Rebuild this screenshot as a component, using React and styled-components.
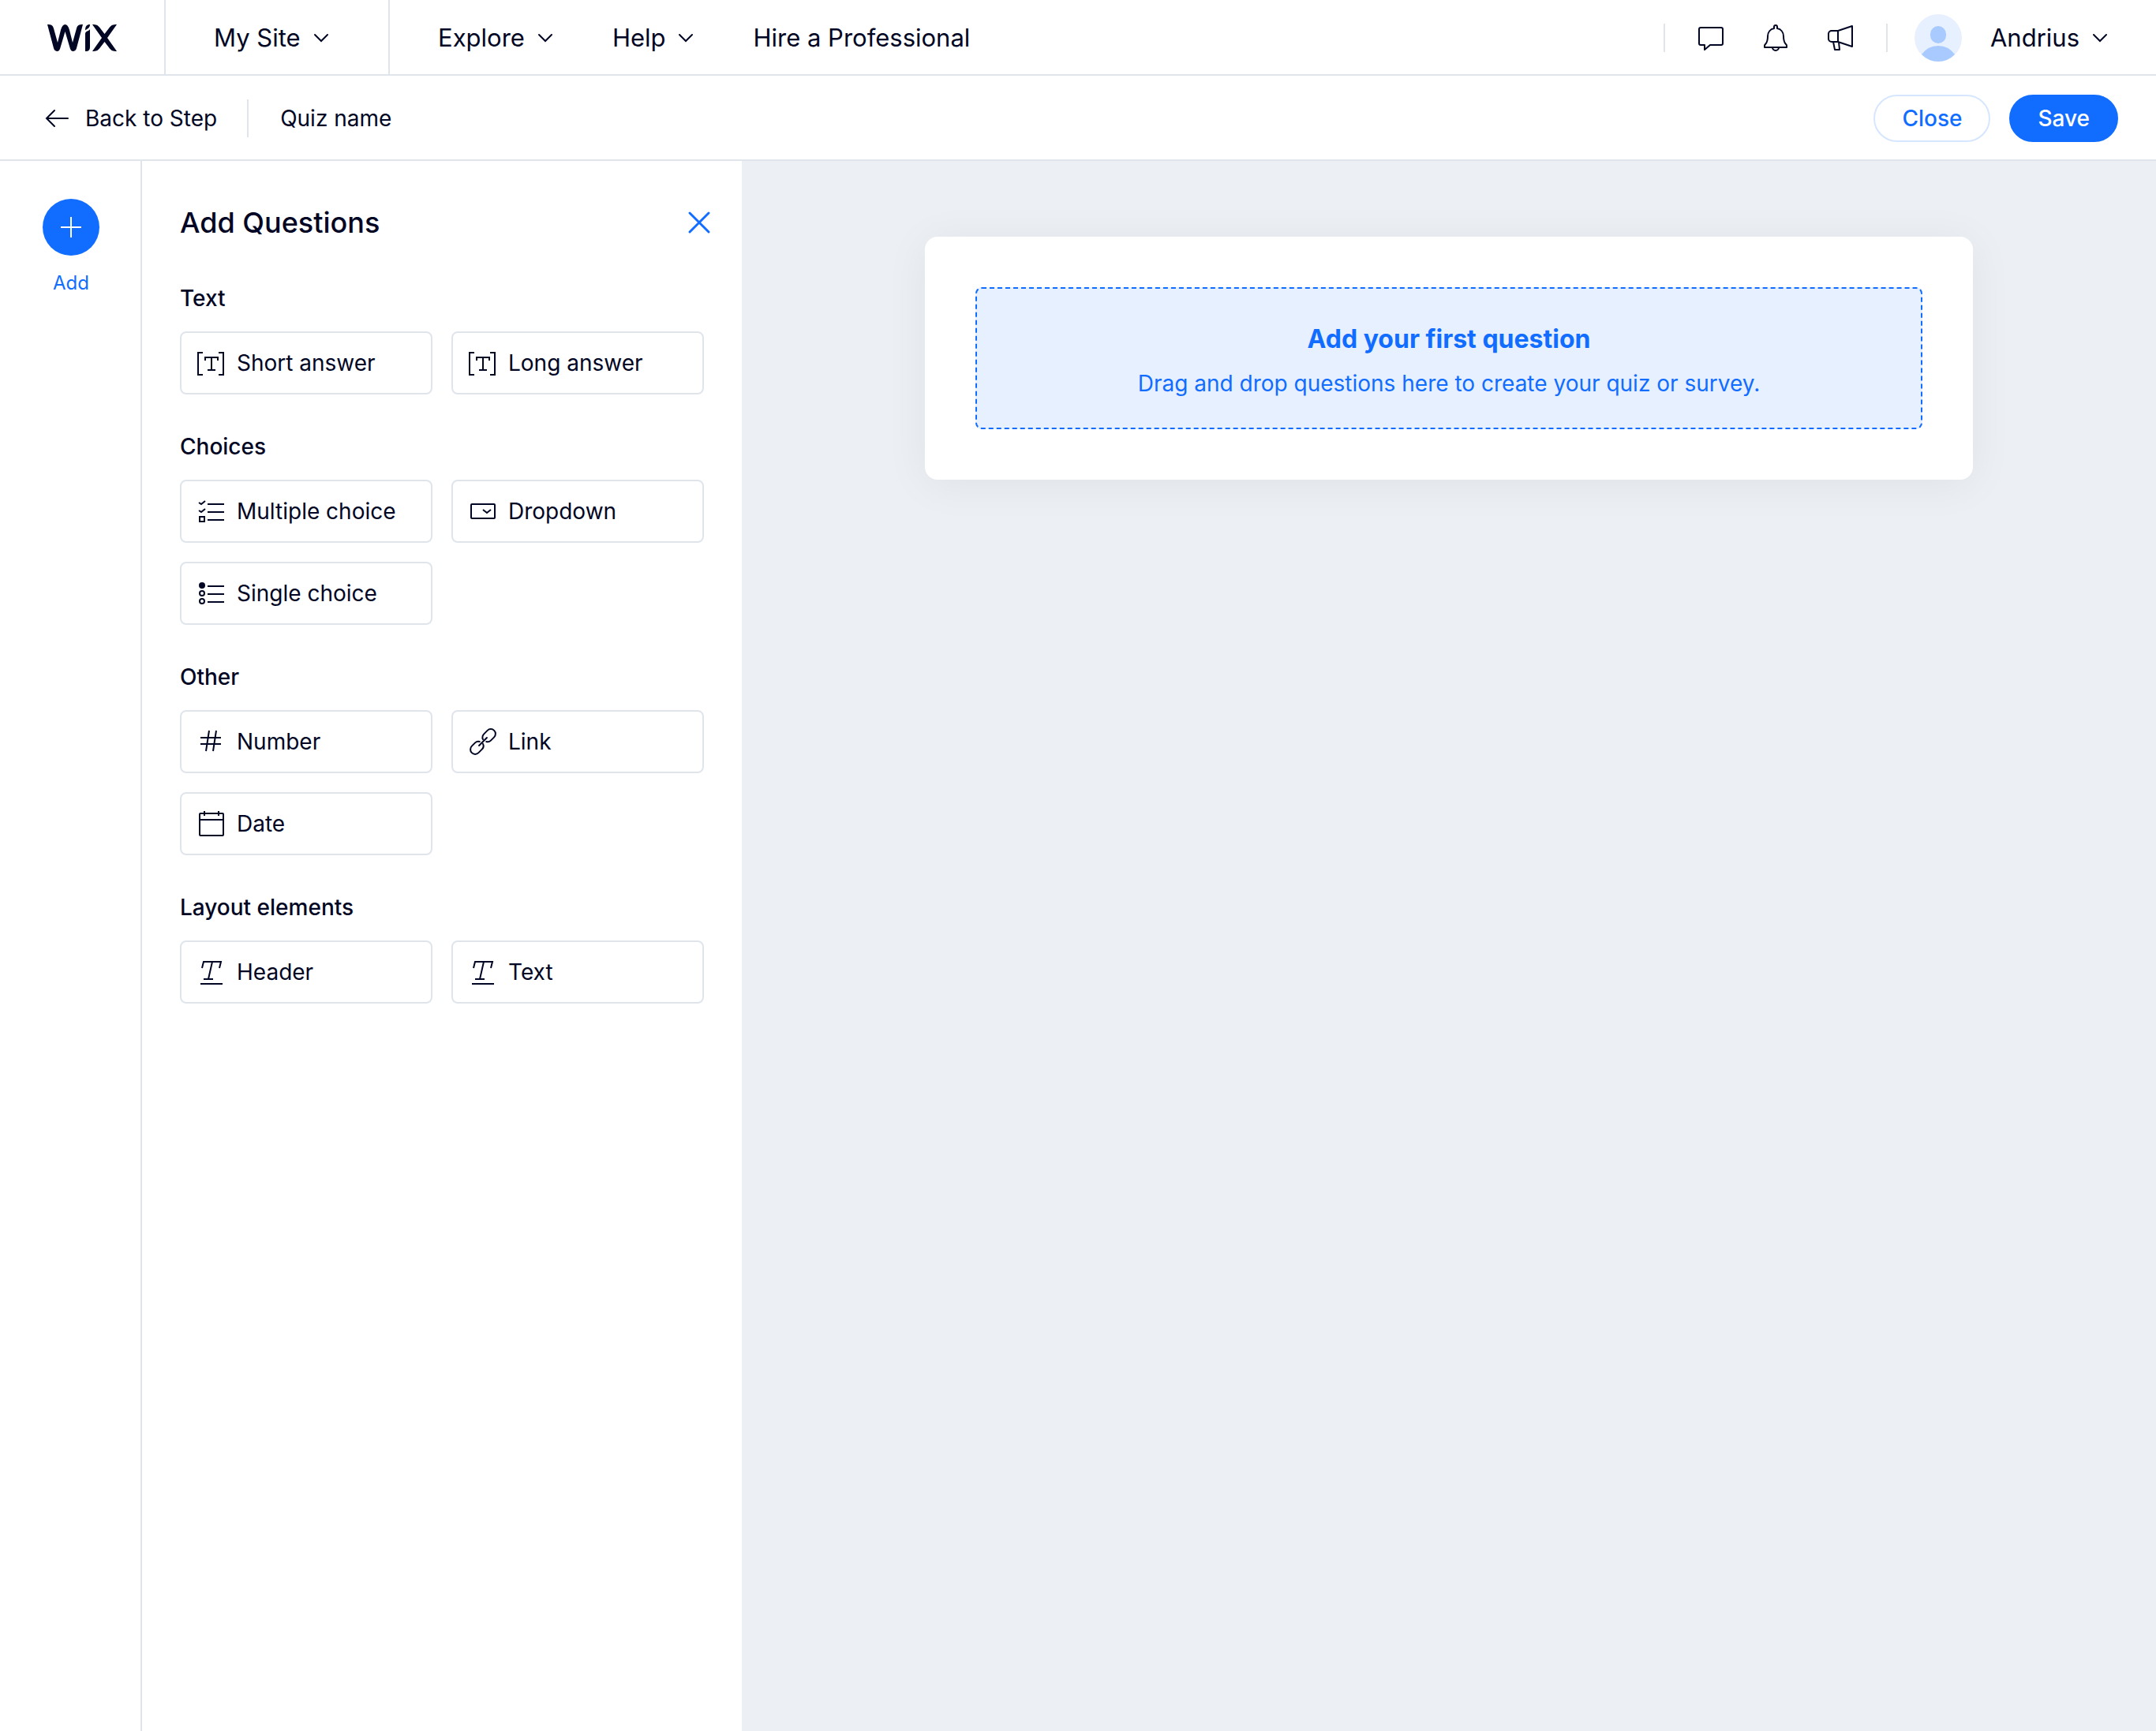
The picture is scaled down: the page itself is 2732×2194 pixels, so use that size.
import React from "react";
import styled, { createGlobalStyle } from "styled-components";

const GlobalStyle = createGlobalStyle`
  *, *::before, *::after {
    box-sizing: border-box;
  }
  body {
    margin: 0;
    background: #ffffff;
    color: #000624;
    font-family: "Inter", "Liberation Sans", sans-serif;
    font-size: 28px;
    line-height: 36px;
  }
  button {
    font: inherit;
    color: inherit;
    background: none;
    border: 0;
    padding: 0;
    cursor: pointer;
  }
  a {
    color: inherit;
    text-decoration: none;
  }
  svg {
    display: block;
    flex: none;
  }
`;

const Page = styled.div`
  display: flex;
  flex-direction: column;
  min-height: 100vh;
`;

const TopBar = styled.header`
  display: flex;
  height: 96px;
  border-bottom: 2px solid #dfe5eb;
  font-size: 31px;
  line-height: 40px;
`;

const LogoLink = styled.a`
  display: flex;
  align-items: center;
  width: 210px;
  padding: 2px 0 0 60px;
  border-right: 2px solid #dfe5eb;
`;

const SiteCell = styled.div`
  display: flex;
  align-items: center;
  width: 284px;
  padding: 2px 0 0 61px;
  border-right: 2px solid #dfe5eb;
`;

const Nav = styled.nav`
  display: flex;
  align-items: center;
  gap: 75px;
  padding: 2px 0 0 61px;
`;

const MenuButton = styled.button`
  display: flex;
  align-items: center;
  gap: 16px;
`;

const Account = styled.div`
  display: flex;
  align-items: center;
  margin-left: auto;
  padding: 2px 61px 0 0;
`;

const IconGroup = styled.div`
  display: flex;
  align-items: center;
  gap: 42px;
  margin: 0 38px;
`;

const Divider = styled.span`
  width: 2px;
  height: ${(props) => props.$size}px;
  background: #dfe5eb;
`;

const UserButton = styled(MenuButton)`
  margin-left: 34px;

  svg:first-child {
    margin-right: 20px;
  }
`;

const ActionBar = styled.div`
  display: flex;
  align-items: center;
  height: 108px;
  padding: 2px 48px 0 56px;
  border-bottom: 2px solid #dfe5eb;
`;

const BackLink = styled.a`
  display: flex;
  align-items: center;
  gap: 20px;
  margin-right: 38px;
`;

const QuizName = styled.span`
  margin-left: 40px;
`;

const Actions = styled.div`
  display: flex;
  gap: 24px;
  margin-left: auto;
`;

const PillButton = styled.button`
  height: 60px;
  padding: 0 34px;
  border: 2px solid ${(props) => (props.$primary ? "#116dff" : "#d6e6fe")};
  border-radius: 30px;
  background: ${(props) => (props.$primary ? "#116dff" : "#ffffff")};
  color: ${(props) => (props.$primary ? "#ffffff" : "#116dff")};
  font-weight: 500;
  line-height: 40px;
`;

const Workspace = styled.div`
  display: flex;
  flex: 1;
`;

const Rail = styled.aside`
  flex: none;
  width: 180px;
  padding: 48px 0 0 2px;
  border-right: 2px solid #dfe5eb;
`;

const RailButton = styled.button`
  display: flex;
  flex-direction: column;
  align-items: center;
  gap: 20px;
  width: 100%;
  color: #116dff;
  font-size: 24px;
  line-height: 30px;
`;

const RailCircle = styled.span`
  display: flex;
  align-items: center;
  justify-content: center;
  width: 72px;
  height: 72px;
  border-radius: 50%;
  background: #116dff;
`;

const Panel = styled.section`
  flex: none;
  width: 760px;
  padding: 54px 48px;
`;

const PanelHeader = styled.div`
  display: flex;
  align-items: center;
  justify-content: space-between;
  height: 48px;
  margin-bottom: 54px;
  margin-right: -9px;
`;

const PanelTitle = styled.h1`
  margin: 0;
  font-size: 36px;
  font-weight: 500;
  line-height: 48px;
`;

const Group = styled.div`
  margin-bottom: 48px;
`;

const GroupTitle = styled.h2`
  margin: 0 0 24px;
  font-size: 28px;
  font-weight: 500;
  line-height: 36px;
`;

const Grid = styled.div`
  display: grid;
  grid-template-columns: repeat(2, 320px);
  gap: 24px;
`;

const QuestionButton = styled.button`
  display: flex;
  align-items: center;
  gap: 12px;
  height: 80px;
  padding: 0 18px;
  border: 2px solid #dfe5eb;
  border-radius: 8px;
  background: #ffffff;
`;

const Canvas = styled.main`
  flex: 1;
  padding: 96px 64px;
  background: #eceff3;
`;

const FormCard = styled.div`
  max-width: 1328px;
  margin: 0 auto;
  padding: 64px;
  border-radius: 16px;
  background: #ffffff;
  box-shadow: 0 6px 56px rgba(0, 6, 36, 0.06);
`;

const DropZone = styled.div`
  padding: 44px 24px 38px;
  border: 2px dashed #116dff;
  border-radius: 8px;
  background: #e7f0ff;
  color: #116dff;
  text-align: center;
`;

const DropTitle = styled.h2`
  margin: 0 0 18px;
  font-size: 32px;
  font-weight: 700;
  line-height: 40px;
`;

const DropText = styled.p`
  margin: 0;
`;

const Icon = ({ size = 40, width, height, stroke = 2, children, ...rest }) => (
  <svg
    width={width || size}
    height={height || size}
    viewBox={`0 0 ${width || size} ${height || size}`}
    fill="none"
    stroke="currentColor"
    strokeWidth={stroke}
    aria-hidden="true"
    {...rest}
  >
    {children}
  </svg>
);

const Chevron = () => (
  <Icon width={20} height={12} strokeLinecap="round">
    <path d="M2 2l8 8 8-8" />
  </Icon>
);

const Logo = () => (
  <svg width="88" height="34" viewBox="0 0 88 34" fill="#000624" role="img" aria-label="Wix">
    <path d="M0 0C5 0 7 1 8 5L13 23L17 7Q19 0 22.500 0Q26 0 28 7L32 23L37 5C38 1 40 0 45 0L37 30Q36 34 32 34Q30 34 29 31L22.500 9L16 31Q15 34 13 34Q9 34 8 30Z" />
    <path d="M54 0C50 0 48 2 48 7.500C50 5.500 54 5 54 0ZM54 6C53 8.500 48 8 48 12V34C53 34 54 32 54 28Z" />
    <path d="M57 0C62 0 64 1 66 3.500L72.500 12L79 3.500C81 1 83 0 88 0L76 17L88 34C83 34 81 33 79 30.500L72.500 22L66 30.500C64 33 62 34 57 34L69 17Z" />
  </svg>
);

const BracketIcon = () => (
  <Icon>
    <path d="M9 7H3V35H9M29 7H35V35H29M12 17V13H28V17M20 13V29M15 29H25" />
  </Icon>
);

const MultipleIcon = () => (
  <Icon>
    <path d="M4 9l3 2 5-4M4 19l3 2 5-4M15 11H36M15 21H36M15 31H36" />
    <rect x="5" y="27" width="6" height="6" />
  </Icon>
);

const SingleIcon = () => (
  <Icon>
    <circle cx="8" cy="10" r="4" fill="currentColor" stroke="none" />
    <circle cx="8" cy="20" r="3" />
    <circle cx="8" cy="30" r="3" />
    <path d="M15 11H36M15 21H36M15 31H36" />
  </Icon>
);

const DropdownIcon = () => (
  <Icon>
    <rect x="5" y="11" width="30" height="18" rx="1" />
    <path d="M20 18l5 4 5-4" />
  </Icon>
);

const NumberIcon = () => (
  <Icon>
    <path d="M6 15H32M6 23H32M17 6L13 32M26 6L22 32" />
  </Icon>
);

const LinkIcon = () => (
  <Icon strokeLinecap="round">
    <g transform="rotate(-45 20 20)">
      <path d="M17 17C16 15 14 14 12 14H6a6 6 0 0 0 0 12H12C15 26 17 25 18 22" />
      <path d="M23 23C24 25 26 26 28 26H34a6 6 0 0 0 0-12H28C25 14 23 15 22 18" />
      <path d="M13 20H27" />
    </g>
  </Icon>
);

const DateIcon = () => (
  <Icon>
    <rect x="5" y="7" width="30" height="28" rx="1" />
    <path d="M5 15H35M11 4V10M29 4V10" />
  </Icon>
);

const TextIcon = () => (
  <Icon>
    <path d="M8 15L10 7H32L30 15M21 7L16 29M10 29H22M6 35H34" />
  </Icon>
);

const groups = [
  {
    title: "Text",
    items: [
      { label: "Short answer", Glyph: BracketIcon },
      { label: "Long answer", Glyph: BracketIcon }
    ]
  },
  {
    title: "Choices",
    items: [
      { label: "Multiple choice", Glyph: MultipleIcon },
      { label: "Dropdown", Glyph: DropdownIcon },
      { label: "Single choice", Glyph: SingleIcon }
    ]
  },
  {
    title: "Other",
    items: [
      { label: "Number", Glyph: NumberIcon },
      { label: "Link", Glyph: LinkIcon },
      { label: "Date", Glyph: DateIcon }
    ]
  },
  {
    title: "Layout elements",
    items: [
      { label: "Header", Glyph: TextIcon },
      { label: "Text", Glyph: TextIcon }
    ]
  }
];

function Header() {
  return (
    <TopBar>
      <LogoLink href="#home">
        <Logo />
      </LogoLink>
      <SiteCell>
        <MenuButton>
          My Site <Chevron />
        </MenuButton>
      </SiteCell>
      <Nav>
        <MenuButton>
          Explore <Chevron />
        </MenuButton>
        <MenuButton>
          Help <Chevron />
        </MenuButton>
        <a href="#hire">Hire a Professional</a>
      </Nav>
      <Account>
        <Divider $size={36} />
        <IconGroup>
          <button aria-label="Messages">
            <Icon strokeLinejoin="round">
              <path d="M7 7H33a2 2 0 0 1 2 2V27a2 2 0 0 1-2 2H19L12 35V29H7a2 2 0 0 1-2-2V9a2 2 0 0 1 2-2Z" />
            </Icon>
          </button>
          <button aria-label="Notifications">
            <Icon strokeLinejoin="round">
              <path d="M18 8V6a2 2 0 0 1 4 0V8C27 9 30 13 30 18C30 24 31 26 33 28Q34 29 34 30V32H6V30Q6 29 7 28C9 26 10 24 10 18C10 13 13 9 18 8Z" />
              <path d="M16 32a4 4 0 0 0 8 0" />
            </Icon>
          </button>
          <button aria-label="Announcements">
            <Icon strokeLinejoin="round">
              <path d="M17 11L35 5V31L17 25ZM17 11H9a4 4 0 0 0-4 4V21a4 4 0 0 0 4 4H17M11 25L13 35H19L18 25" />
            </Icon>
          </button>
        </IconGroup>
        <Divider $size={36} />
        <UserButton>
          <svg width="60" height="60" viewBox="0 0 60 60" aria-hidden="true">
            <circle cx="30" cy="30" r="30" fill="#e7f0ff" />
            <rect x="20" y="15" width="20" height="22" rx="10" fill="#a8caff" />
            <path d="M9 51Q17 40 30 40T51 51Q42 60 30 60T9 51Z" fill="#a8caff" />
          </svg>
          Andrius <Chevron />
        </UserButton>
      </Account>
    </TopBar>
  );
}

function QuestionPanel() {
  return (
    <Panel>
      <PanelHeader>
        <PanelTitle>Add Questions</PanelTitle>
        <button aria-label="Close panel">
          <Icon size={30} stroke={3} color="#116dff" strokeLinecap="round">
            <path d="M3 3L27 27M27 3L3 27" />
          </Icon>
        </button>
      </PanelHeader>
      {groups.map(({ title, items }) => (
        <Group key={title}>
          <GroupTitle>{title}</GroupTitle>
          <Grid>
            {items.map(({ label, Glyph }) => (
              <QuestionButton key={label}>
                <Glyph />
                {label}
              </QuestionButton>
            ))}
          </Grid>
        </Group>
      ))}
    </Panel>
  );
}

function App() {
  return (
    <Page>
      <GlobalStyle />
      <Header />
      <ActionBar>
        <BackLink href="#back">
          <Icon width={32} height={24} strokeLinecap="round">
            <path d="M13 2L3 12L13 22M3 12H30" />
          </Icon>
          Back to Step
        </BackLink>
        <Divider $size={48} />
        <QuizName>Quiz name</QuizName>
        <Actions>
          <PillButton>Close</PillButton>
          <PillButton $primary>Save</PillButton>
        </Actions>
      </ActionBar>
      <Workspace>
        <Rail>
          <RailButton>
            <RailCircle>
              <Icon size={26} color="#ffffff">
                <path d="M13 0V26M0 13H26" />
              </Icon>
            </RailCircle>
            Add
          </RailButton>
        </Rail>
        <QuestionPanel />
        <Canvas>
          <FormCard>
            <DropZone>
              <DropTitle>Add your first question</DropTitle>
              <DropText>
                Drag and drop questions here to create your quiz or survey.
              </DropText>
            </DropZone>
          </FormCard>
        </Canvas>
      </Workspace>
    </Page>
  );
}

export default App;
